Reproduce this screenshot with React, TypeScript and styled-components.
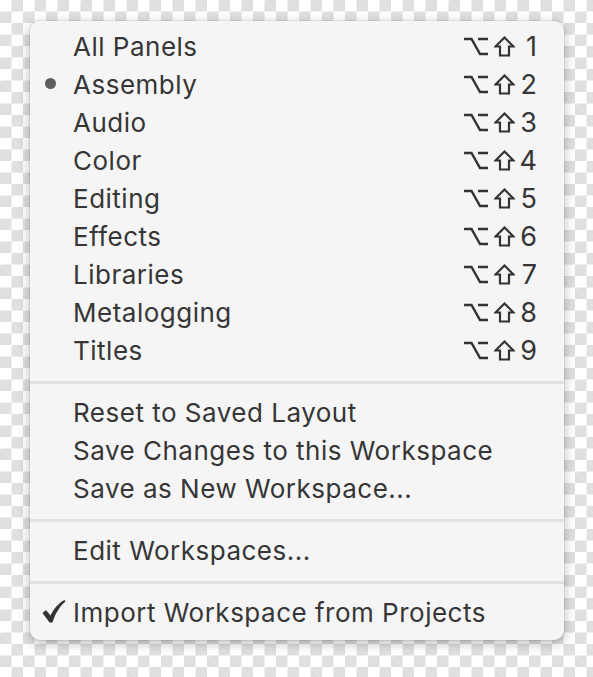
import React from "react";
import styled, { createGlobalStyle } from "styled-components";

const GlobalStyle = createGlobalStyle`
  html, body {
    margin: 0;
    padding: 0;
  }
  body {
    width: 593px;
    height: 677px;
    overflow: hidden;
    background-color: #ffffff;
    background-image:
      linear-gradient(45deg, #dfdfdf 25%, transparent 25%, transparent 75%, #dfdfdf 75%),
      linear-gradient(45deg, #dfdfdf 25%, transparent 25%, transparent 75%, #dfdfdf 75%);
    background-size: 23px 23px;
    background-position: 0 0, 11.5px 11.5px;
    font-family: Inter, "Liberation Sans", Arial, sans-serif;
  }
`;

const Page = styled.div`
  padding: 21px 0 0 30px;
`;

const Menu = styled.div`
  width: 534px;
  box-sizing: border-box;
  padding: 6px 0 9px;
  background: #f5f5f5;
  border-radius: 10px;
  box-shadow: 0 3px 12px rgba(0, 0, 0, 0.28), 0 0 0 1px rgba(0, 0, 0, 0.06);
`;

const Row = styled.div`
  display: flex;
  align-items: center;
  height: 38px;
  padding: 0 27px 0 43px;
  position: relative;
  color: #363636;
  font-size: 26px;
  letter-spacing: 0.5px;
`;

const Label = styled.span`
  flex: 1;
  white-space: nowrap;
`;

const Marker = styled.span`
  position: absolute;
  left: 12px;
  top: 50%;
  transform: translateY(-50%);
  display: flex;
  align-items: center;
`;

const Dot = styled.span`
  width: 11px;
  height: 11px;
  border-radius: 50%;
  background: #5e5e5e;
  margin-left: 3px;
  margin-top: -1px;
`;

const Shortcut = styled.span`
  display: flex;
  align-items: center;
  gap: 6px;
`;

const Key = styled.span`
  width: 18px;
  margin-left: -2px;
  text-align: right;
  letter-spacing: 0;
  font-size: 27px;
`;

const Separator = styled.div`
  height: 24px;
  box-sizing: border-box;
  padding-top: 2px;
  display: flex;
  align-items: center;
  &::after {
    content: "";
    flex: 1;
    height: 3px;
    background: #e2e2e2;
  }
`;

const OptionIcon = () => (
  <svg width="24" height="19" viewBox="0 0 24 19">
    <path
      d="M0 2 H7.5 L16 17 H24 M14 2 H24"
      fill="none"
      stroke="#333"
      strokeWidth="2.4"
    />
  </svg>
);

const ShiftIcon = () => (
  <svg width="21" height="21" viewBox="0 0 21 21">
    <path
      d="M10.5 1.5 L19.5 10.5 H15 V19.5 H6 V10.5 H1.5 Z"
      fill="none"
      stroke="#333"
      strokeWidth="2.2"
      strokeLinejoin="miter"
    />
  </svg>
);

const CheckIcon = () => (
  <svg width="24" height="24" viewBox="0 0 24 24">
    <path
      d="M0.5 13 L4 10 L8.5 15.5 C12 8.5 16.5 3 22.5 0 L23.5 1.5 C18 6 13.5 13 10.5 22.5 L7.5 22.5 Z"
      fill="#333"
    />
  </svg>
);

const panels = [
  "All Panels",
  "Assembly",
  "Audio",
  "Color",
  "Editing",
  "Effects",
  "Libraries",
  "Metalogging",
  "Titles",
];

const App: React.FC = () => {
  return (
    <>
      <GlobalStyle />
      <Page>
        <Menu>
          {panels.map((name, i) => (
            <Row key={name}>
              {name === "Assembly" && (
                <Marker>
                  <Dot />
                </Marker>
              )}
              <Label>{name}</Label>
              <Shortcut>
                <OptionIcon />
                <ShiftIcon />
                <Key>{i + 1}</Key>
              </Shortcut>
            </Row>
          ))}
          <Separator />
          <Row>
            <Label>Reset to Saved Layout</Label>
          </Row>
          <Row>
            <Label>Save Changes to this Workspace</Label>
          </Row>
          <Row>
            <Label>Save as New Workspace...</Label>
          </Row>
          <Separator />
          <Row>
            <Label>Edit Workspaces...</Label>
          </Row>
          <Separator />
          <Row>
            <Marker>
              <CheckIcon />
            </Marker>
            <Label>Import Workspace from Projects</Label>
          </Row>
        </Menu>
      </Page>
    </>
  );
};

export default App;
